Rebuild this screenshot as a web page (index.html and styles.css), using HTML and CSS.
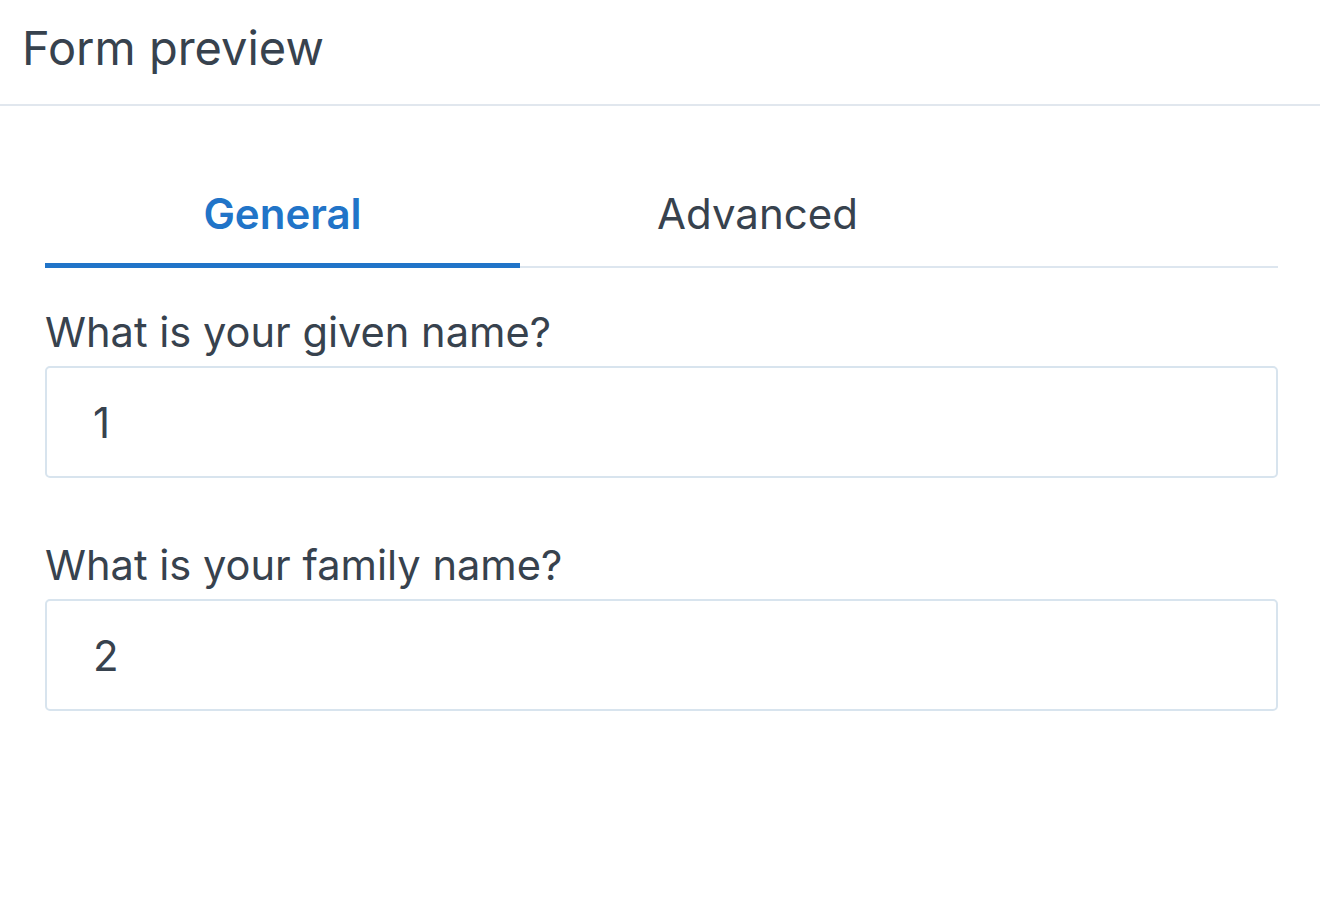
FILE: index.html
```html
<!DOCTYPE html>
<html lang="en">

<head>
    <meta charset="UTF-8">
    <meta name="viewport" content="width=device-width, initial-scale=1.0">
    <title>Form preview</title>
    <link rel="stylesheet" href="styles.css">
</head>

<body>

    <div class="panel">
        <div class="panel-header">
            <h2>Form preview</h2>
        </div>

        <div class="panel-body">
            <div class="tabs">
                <button class="tab active">General</button>
                <button class="tab">Advanced</button>
            </div>

            <div class="field">
                <label for="givenName">What is your given name?</label>
                <input type="text" id="givenName" value="1">
            </div>

            <div class="field">
                <label for="familyName">What is your family name?</label>
                <input type="text" id="familyName" value="2">
            </div>
        </div>
    </div>

</body>

</html>
```

FILE: styles.css
```css
body {
    font-family: Inter, "Noto Sans", Arial, sans-serif;
    background-color: #fff;
    color: #37424e;
    margin: 0;
}

.panel-header {
    height: 106px;
    padding: 0 22px;
    border-bottom: 2px solid #e1e7ee;
    box-sizing: border-box;
}

h2 {
    margin: 0;
    font-size: 47px;
    font-weight: 400;
    line-height: 96px;
}

.panel-body {
    padding: 0 42px 0 45px;
}

.tabs {
    display: flex;
    margin-top: 76px;
    border-bottom: 2px solid #dde6ef;
}

.tab {
    width: 475px;
    height: 86px;
    padding: 0 0 18px;
    font-family: inherit;
    font-size: 42px;
    font-weight: 400;
    color: #37424e;
    background: none;
    border: none;
    border-bottom: 5px solid transparent;
    margin-bottom: -2px;
}

.tab.active {
    color: #2174c8;
    font-weight: 600;
    border-bottom-color: #2174c8;
}

.field {
    margin-top: 36px;
}

.field + .field {
    margin-top: 59px;
}

label {
    display: block;
    font-size: 41.6px;
    line-height: 56px;
    margin-bottom: 6px;
}

input {
    display: block;
    width: 100%;
    height: 112px;
    box-sizing: border-box;
    padding: 0 46px;
    font-family: inherit;
    font-size: 42px;
    color: #37424e;
    border: 2px solid #d8e4ee;
    border-radius: 5px;
    outline: none;
}
```
